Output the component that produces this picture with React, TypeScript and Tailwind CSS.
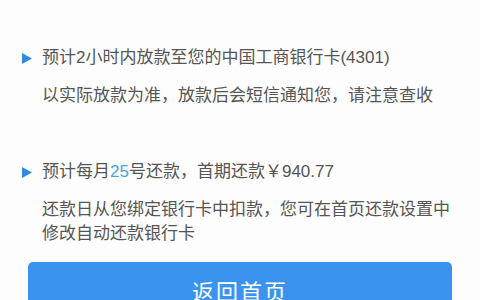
export default function App() {
  const font = { fontFamily: '"Liberation Sans", "Noto Sans CJK SC", sans-serif' }
  return (
    <div className="w-[480px] h-[300px] overflow-hidden bg-[#fdfdfd] text-[#555] text-[17px]" style={font}>
      {/* 放款 */}
      <div className="pt-[46px] pl-[22px] pr-4">
        <div className="flex items-center h-6">
          <svg width="10" height="11" viewBox="0 0 10 11" className="mr-[10px]">
            <path d="M0 0 L10 5.5 L0 11 Z" fill="#2d8be0" />
          </svg>
          <span>预计2小时内放款至您的中国工商银行卡(4301)</span>
        </div>
        <p className="pl-5 mt-[14px] leading-6">以实际放款为准，放款后会短信通知您，请注意查收</p>
      </div>

      {/* 还款 */}
      <div className="pt-[52px] pl-[22px] pr-2">
        <div className="flex items-center h-6">
          <svg width="10" height="11" viewBox="0 0 10 11" className="mr-[10px]">
            <path d="M0 0 L10 5.5 L0 11 Z" fill="#2d8be0" />
          </svg>
          <span>
            预计每月<span className="text-[#45a3e2]">25</span>号还款，首期还款￥940.77
          </span>
        </div>
        <p className="pl-5 mt-[14px] leading-6">
          还款日从您绑定银行卡中扣款，您可在首页还款设置中
          <br />
          修改自动还款银行卡
        </p>
      </div>

      <div className="px-[28px] mt-4">
        <button className="w-full h-[60px] rounded-[5px] bg-[#3a93ee] text-white text-[22px] tracking-[2px]">
          返回首页
        </button>
      </div>
    </div>
  )
}
